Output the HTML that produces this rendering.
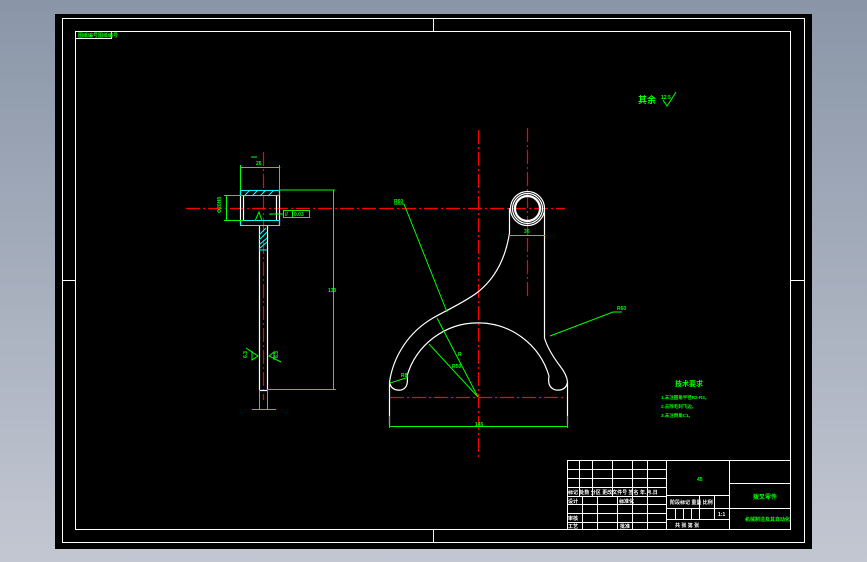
<!DOCTYPE html>
<html><head><meta charset="utf-8"><style>
html,body{margin:0;padding:0;width:867px;height:562px;overflow:hidden;background:linear-gradient(#8a96a8,#c3c7d2);}
svg{display:block}
text{font-family:"Liberation Sans","Noto Sans CJK SC",sans-serif;fill:#00ff00;font-weight:bold}
</style></head><body>
<svg width="867" height="562" viewBox="0 0 867 562">
<rect x="55" y="14" width="757" height="535" fill="#000"/>
<g fill="none" stroke="#fff" stroke-width="1">
<rect x="62.5" y="18.5" width="742" height="524"/>
<rect x="75.5" y="31.5" width="715" height="498"/>
<rect x="75.5" y="31.5" width="36" height="7"/>
<line x1="433.5" y1="18" x2="433.5" y2="31"/><line x1="433.5" y1="530" x2="433.5" y2="543"/>
<line x1="62" y1="280.5" x2="75" y2="280.5"/><line x1="791" y1="280.5" x2="805" y2="280.5"/>
</g>
<text x="78" y="37" font-size="5">图纸编号图纸编号</text>
<!-- title block -->
<g stroke="#fff" stroke-width="1" fill="none">
<rect x="567.5" y="460.5" width="223" height="69"/>
<line x1="567" y1="469.5" x2="666" y2="469.5"/><line x1="567" y1="478.5" x2="666" y2="478.5"/>
<line x1="567" y1="487.5" x2="666" y2="487.5"/><line x1="567" y1="496.5" x2="666" y2="496.5"/>
<line x1="567" y1="504.5" x2="666" y2="504.5"/><line x1="567" y1="513.5" x2="666" y2="513.5"/>
<line x1="567" y1="522.5" x2="666" y2="522.5"/>
<line x1="579.5" y1="460" x2="579.5" y2="496"/><line x1="592.5" y1="460" x2="592.5" y2="496"/>
<line x1="612.5" y1="460" x2="612.5" y2="496"/><line x1="632.5" y1="460" x2="632.5" y2="530"/>
<line x1="647.5" y1="460" x2="647.5" y2="530"/><line x1="666.5" y1="460" x2="666.5" y2="530"/>
<line x1="582.5" y1="496" x2="582.5" y2="530"/><line x1="597.5" y1="496" x2="597.5" y2="530"/>
<line x1="617.5" y1="496" x2="617.5" y2="530"/>
<line x1="729.5" y1="460" x2="729.5" y2="530"/>
<line x1="666" y1="495.5" x2="729" y2="495.5"/><line x1="666" y1="508.5" x2="729" y2="508.5"/>
<line x1="666" y1="519.5" x2="729" y2="519.5"/>
<line x1="699.5" y1="495" x2="699.5" y2="519"/><line x1="714.5" y1="495" x2="714.5" y2="519"/>
<line x1="675.5" y1="508" x2="675.5" y2="519"/><line x1="683.5" y1="508" x2="683.5" y2="519"/><line x1="691.5" y1="508" x2="691.5" y2="519"/>
<line x1="729" y1="483.5" x2="791" y2="483.5"/><line x1="729" y1="508.5" x2="791" y2="508.5"/>
</g>
<g font-size="5" style="fill:#fff">
<text x="568" y="494" style="fill:#fff">标记 处数 分区 更改文件号 签名 年.月.日</text>
<text x="568" y="503" style="fill:#fff">设计</text><text x="619" y="503" style="fill:#fff">标准化</text>
<text x="568" y="520" style="fill:#fff">审核</text>
<text x="568" y="528" style="fill:#fff">工艺</text><text x="620" y="528" style="fill:#fff">批准</text>
<text x="670" y="504" style="fill:#fff">阶段标记  重量 比例</text>
<text x="718" y="516" style="fill:#fff">1:1</text>
<text x="675" y="527" style="fill:#fff">共  张  第  张</text>
</g>
<text x="697" y="481" font-size="5">45</text>
<text x="753" y="499" font-size="6">拨叉零件</text>
<text x="745" y="521" font-size="5">机械制造及其自动化</text>
<!-- center lines -->
<g stroke="#f00" stroke-width="1.2" stroke-dasharray="14,3,2,3" fill="none">
<line x1="478.5" y1="130" x2="478.5" y2="460"/>
<line x1="527.5" y1="128" x2="527.5" y2="298"/>
<line x1="380" y1="208.5" x2="565" y2="208.5"/>
<line x1="390" y1="397.5" x2="566" y2="397.5"/>
<line x1="186" y1="208.5" x2="380" y2="208.5"/>
<line x1="263.5" y1="152" x2="263.5" y2="400"/>
</g>
<!-- fork -->
<g stroke="#fff" stroke-width="1.2" fill="none">
<circle cx="527.5" cy="208.5" r="17"/><circle cx="527.5" cy="208.5" r="15"/>
<circle cx="527.5" cy="208.5" r="13"/><circle cx="527.5" cy="208.5" r="12"/>
<path d="M509.5 208 L509.5 233 C505 262 493 280 478 292 C465 302 447 310 433 318 A89 89 0 0 0 389.5 382 L389.5 425"/>
<path d="M389.5 382 Q391 391 401 390 Q409 388 407 376 A74 74 0 0 1 549 376 Q547 388 556 390 Q566 391 567.5 382 L567.5 425"/>
<path d="M544.5 208 L544.5 338 Q548 350 560 366 Q567 375 567.5 382"/>
</g>
<g stroke="#0f0" stroke-width="1" fill="none">
<line x1="389" y1="426.5" x2="567" y2="426.5"/>
<line x1="389.5" y1="416" x2="389.5" y2="428"/><line x1="567.5" y1="416" x2="567.5" y2="428"/>
<line x1="509" y1="235.5" x2="545" y2="235.5"/>
<polyline points="394,204 404,204 447,312"/>
<polyline points="622,312 613,312 550,336"/>
<line x1="437" y1="318" x2="478" y2="397"/>
<line x1="429" y1="344" x2="478" y2="397"/>
<line x1="390" y1="383" x2="406" y2="378"/>
</g>
<g font-size="5">
<text x="394" y="203">R60</text><text x="617" y="310">R60</text>
<text x="475" y="426">145</text><text x="524" y="233">36</text>
<text x="458" y="356">R</text><text x="452" y="368">R50</text><text x="401" y="377">R8</text>
</g>
<!-- left view -->
<g stroke="#fff" stroke-width="1.2" fill="none">
<line x1="240.5" y1="190" x2="240.5" y2="225"/><line x1="279.5" y1="190" x2="279.5" y2="225"/>
<line x1="243.5" y1="195" x2="243.5" y2="220"/><line x1="276.5" y1="195" x2="276.5" y2="220"/>
<line x1="259.5" y1="225" x2="259.5" y2="390"/><line x1="267.5" y1="225" x2="267.5" y2="390"/>
<line x1="259" y1="390.5" x2="267" y2="390.5"/>
</g>
<g stroke="#0ff" stroke-width="1" fill="none">
<rect x="240.5" y="190.5" width="39" height="5"/>
<rect x="240.5" y="220.5" width="39" height="5"/>
<path d="M259 250 L267 250 M259 245 L267 238 M259 240 L267 232 M259 235 L266 228 M259 249 L267 242"/>
<path d="M244 196 L250 190 M252 196 L258 190 M260 196 L266 190 M268 196 L274 190"/>
</g>
<g stroke="#0f0" stroke-width="1" fill="none">
<line x1="240.5" y1="165" x2="240.5" y2="190"/><line x1="279.5" y1="165" x2="279.5" y2="190"/>
<line x1="240" y1="167.5" x2="279" y2="167.5"/>
<polyline points="279,190 335,190"/><line x1="333.5" y1="190" x2="333.5" y2="390"/>
<line x1="267" y1="389.5" x2="336" y2="389.5"/>
<line x1="226.5" y1="195" x2="226.5" y2="221"/>
<line x1="224" y1="195.5" x2="243" y2="195.5"/><line x1="224" y1="220.5" x2="243" y2="220.5"/>
<rect x="283.5" y="210.5" width="26" height="7"/><line x1="292.5" y1="210" x2="292.5" y2="218"/>
<polyline points="270,215 270,214 283,214"/>
<line x1="259.5" y1="390" x2="259.5" y2="410"/><line x1="267.5" y1="390" x2="267.5" y2="410"/>
<line x1="252" y1="409.5" x2="276" y2="409.5"/>
<path d="M246 348 L258 356 L252 360 L252 351 M281 362 L269 356 L274 352 L274 360"/>
<path d="M251 157 L257 157 M255 221 L259 212 L262 221"/>
</g>
<g font-size="5">
<text x="256" y="165">26</text><text x="328" y="292">130</text>
<text x="221" y="213" transform="rotate(-90 221 213)">Φ20H8</text>
<text x="285" y="216">//</text><text x="294" y="216">0.03</text>
<text x="247" y="358" transform="rotate(-90 247 358)">6.3</text>
<text x="278" y="358" transform="rotate(-90 278 358)">6.3</text>
</g>
<!-- notes -->
<text x="638" y="103" font-size="9">其余</text>
<text x="661" y="99" font-size="5">12.5</text>
<path d="M663 100 L667 106 L671 100 M671 100 L676 92" stroke="#0f0" fill="none"/>
<text x="675" y="386" font-size="7">技术要求</text>
<g font-size="4.5">
<text x="661" y="399">1.未注圆角半径R2-R3。</text>
<text x="661" y="408">2.去除毛刺飞边。</text>
<text x="661" y="417">3.未注倒角C1。</text>
</g>
</svg>
</body></html>
